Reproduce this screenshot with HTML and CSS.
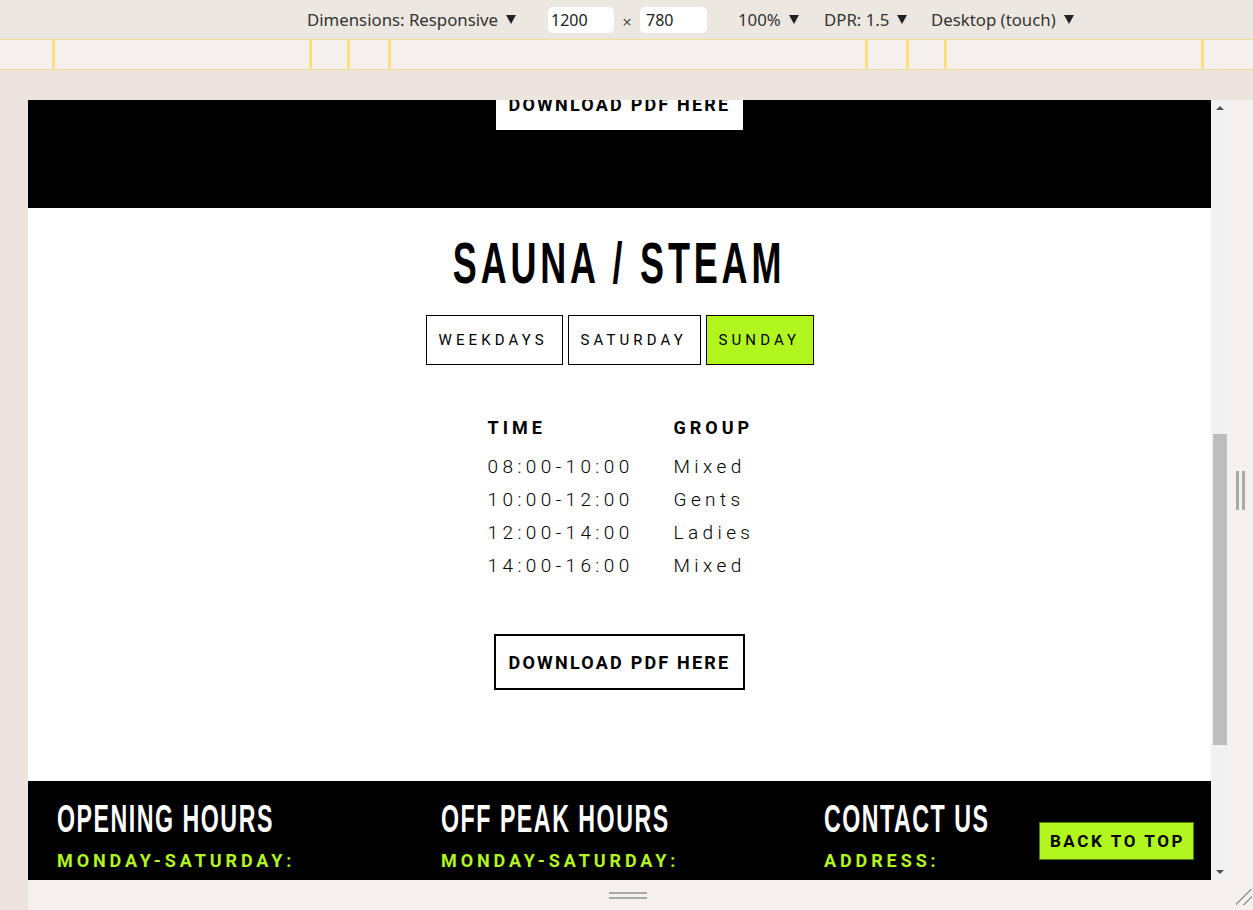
FILE: index.html
```html
<!DOCTYPE html>
<html lang="en">
<head>
<meta charset="utf-8">
<title>Sauna / Steam</title>
<link rel="stylesheet" href="styles.css">
</head>
<body>
<div class="toolbar">
  <div class="tb-item tb-dims">Dimensions: Responsive<span class="caret"></span></div>
  <div class="tb-input">1200</div>
  <div class="tb-times">×</div>
  <div class="tb-input">780</div>
  <div class="tb-item tb-zoom">100%<span class="caret"></span></div>
  <div class="tb-item tb-dpr">DPR: 1.5<span class="caret"></span></div>
  <div class="tb-item tb-dev">Desktop (touch)<span class="caret"></span></div>
</div>
<div class="ruler">
  <span class="tick" style="left:52px"></span>
  <span class="tick" style="left:309px"></span>
  <span class="tick" style="left:347px"></span>
  <span class="tick" style="left:388px"></span>
  <span class="tick" style="left:865px"></span>
  <span class="tick" style="left:906px"></span>
  <span class="tick" style="left:944px"></span>
  <span class="tick" style="left:1201px"></span>
</div>
<div class="stage">
  <div class="device">
    <div class="frame">
      <div class="viewport">
        <div class="page">
          <section class="band-black">
            <a class="btn btn-inverse">DOWNLOAD PDF HERE</a>
          </section>
          <section class="band-white">
            <h2 class="title"><span class="title-text">SAUNA / STEAM</span></h2>
            <div class="tabs">
              <button class="tab">WEEKDAYS</button>
              <button class="tab">SATURDAY</button>
              <button class="tab tab-active">SUNDAY</button>
            </div>
            <div class="schedule">
              <div class="th">TIME</div><div class="th">GROUP</div>
              <div class="td">08:00-10:00</div><div class="td">Mixed</div>
              <div class="td">10:00-12:00</div><div class="td">Gents</div>
              <div class="td">12:00-14:00</div><div class="td">Ladies</div>
              <div class="td">14:00-16:00</div><div class="td">Mixed</div>
            </div>
            <a class="btn">DOWNLOAD PDF HERE</a>
          </section>
          <footer class="footer">
            <div class="fcol">
              <h3 class="fhead"><span class="fhead-text">OPENING HOURS</span></h3>
              <div class="fsub">MONDAY-SATURDAY:</div>
            </div>
            <div class="fcol">
              <h3 class="fhead"><span class="fhead-text">OFF PEAK HOURS</span></h3>
              <div class="fsub">MONDAY-SATURDAY:</div>
            </div>
            <div class="fcol">
              <h3 class="fhead"><span class="fhead-text">CONTACT US</span></h3>
              <div class="fsub">ADDRESS:</div>
            </div>
          </footer>
          <a class="back-top">BACK TO TOP</a>
        </div>
        <div class="scrollbar">
          <span class="sb-up"></span>
          <div class="sb-track"><span class="sb-thumb"></span></div>
          <span class="sb-down"></span>
        </div>
      </div>
      <div class="bottom-bar"><span class="hgrip"></span></div>
    </div>
    <div class="side">
      <span class="vgrip"></span>
      <span class="corner"></span>
    </div>
  </div>
</div>
</body>
</html>
```

FILE: styles.css
```css
* { box-sizing: border-box; }
html, body { margin: 0; padding: 0; }
body {
  width: 1253px;
  height: 910px;
  overflow: hidden;
  background: #ebe5de;
  font-family: "Noto Sans", "Open Sans", sans-serif;
}

/* ---------- devtools toolbar ---------- */
.toolbar {
  height: 39px;
  background: #ede7e1;
  display: flex;
  align-items: center;
  padding-left: 307px;
  font-size: 16.8px;
  color: #333;
}
.tb-item { display: flex; align-items: center; white-space: nowrap; }
.tb-dims { width: 241px; }
.tb-zoom { width: 86px; }
.tb-dpr { width: 107px; }
.caret {
  display: inline-block;
  width: 0; height: 0;
  margin-left: 8px;
  border-left: 5.5px solid transparent;
  border-right: 5.5px solid transparent;
  border-top: 9px solid #222;
}
.tb-input {
  width: 66px;
  height: 26px;
  background: #fff;
  border-radius: 5px;
  padding-left: 3px;
  line-height: 26px;
  font-size: 16px;
  color: #222;
}
.tb-times { width: 26px; text-align: center; color: #555; padding-top: 4px; }
.tb-input + .tb-times + .tb-input { width: 67px; padding-left: 6px; margin-right: 31px; }

/* ---------- ruler ---------- */
.ruler {
  position: relative;
  height: 31px;
  background: #f6f1ef;
  border-top: 1px solid #f6dd8c;
  border-bottom: 1px solid #f6dd8c;
}
.tick {
  position: absolute;
  top: 0;
  width: 3px;
  height: 28px;
  background: #fde07c;
}

/* ---------- stage ---------- */
.stage { padding-top: 30px; padding-left: 28px; }
.device { display: flex; background: #f6f1ef; height: 810px; }
.frame { width: 1200px; display: flex; flex-direction: column; }
.viewport { display: flex; height: 780px; }
.page {
  position: relative;
  width: 1183px;
  height: 780px;
  overflow: hidden;
  background: #fff;
  display: flex;
  flex-direction: column;
  font-family: "Roboto", "Liberation Sans", sans-serif;
  color: #000;
}

.band-black {
  background: #000;
  display: flex;
  flex-direction: column;
  align-items: center;
  padding-bottom: 76px;
  flex-shrink: 0;
}
.band-white {
  display: flex;
  flex-direction: column;
  align-items: center;
  padding-top: 26px;
  padding-bottom: 91px;
  flex-shrink: 0;
}

.btn {
  display: flex;
  align-items: center;
  justify-content: center;
  height: 56px;
  padding: 0 10px;
  border: 2px solid #000;
  background: #fff;
  color: #000;
  font-weight: 700;
  font-size: 18px;
  letter-spacing: 2.2px;
  white-space: nowrap;
  width: 251px;
  text-decoration: none;
}
.btn-inverse { margin-top: -24px; }

.title {
  margin: 0;
  font-family: "Liberation Sans", "Arimo", sans-serif;
  font-weight: 700;
  font-size: 58px;
  line-height: 1;
  display: flex;
  justify-content: center;
}
.title-text {
  display: inline-block;
  letter-spacing: 6.2px;
  transform: scaleX(0.62);
  white-space: nowrap;
}

.tabs { display: flex; gap: 5px; margin-top: 23px; }
.tab {
  height: 50px;
  border: 1px solid #000;
  background: #fff;
  font-family: "Roboto", "Liberation Sans", sans-serif;
  font-size: 15px;
  letter-spacing: 4.1px;
  padding: 0 0 0 12px;
  text-align: left;
  color: #000;
}
.tab:nth-child(1) { width: 137px; }
.tab:nth-child(2) { width: 133px; }
.tab:nth-child(3) { width: 108px; }
.tab-active { background: #b2f61f; }

.schedule {
  display: grid;
  grid-template-columns: 186px 78px;
  margin-top: 46px;
  margin-bottom: 52px;
}
.th {
  font-weight: 700;
  font-size: 18px;
  line-height: 33px;
  letter-spacing: 4px;
  margin-bottom: 6px;
}
.td {
  font-weight: 300;
  font-size: 19px;
  line-height: 33px;
  letter-spacing: 4.4px;
  white-space: nowrap;
}

.footer {
  background: #000;
  display: grid;
  grid-template-columns: 384px 383px 215px;
  padding-left: 29px;
  padding-top: 19px;
  height: 120px;
  flex-shrink: 0;
}
.fhead {
  margin: 0;
  font-family: "Liberation Sans", "Arimo", sans-serif;
  font-weight: 700;
  font-size: 38px;
  line-height: 1;
  color: #fff;
  white-space: nowrap;
}
.fhead-text {
  display: inline-block;
  letter-spacing: 2.5px;
  transform: scaleX(0.61);
  transform-origin: left center;
}
.fsub {
  margin-top: 14px;
  font-weight: 700;
  font-size: 18px;
  line-height: 1;
  letter-spacing: 3.9px;
  color: #b2f61f;
  white-space: nowrap;
}

.back-top {
  position: absolute;
  right: 17px;
  bottom: 20px;
  width: 155px;
  height: 38px;
  background: #b2f61f;
  border: 1px solid #4f7d12;
  display: flex;
  align-items: center;
  justify-content: center;
  padding-left: 2px;
  font-weight: 700;
  font-size: 17px;
  letter-spacing: 2.6px;
  color: #000;
  white-space: nowrap;
}

/* ---------- scrollbar ---------- */
.scrollbar {
  width: 17px;
  background: #f1f1f1;
  display: flex;
  flex-direction: column;
  align-items: center;
}
.sb-up, .sb-down {
  width: 0; height: 0;
  border-left: 4px solid transparent;
  border-right: 4px solid transparent;
  flex: 0 0 4px;
}
.sb-up { border-bottom: 4px solid #505050; margin-top: 6px; margin-bottom: 7px; }
.sb-down { border-top: 4px solid #505050; margin-bottom: 6px; margin-top: 7px; }
.sb-track { flex: 1; width: 100%; padding: 0 1px 0 2px; }
.sb-thumb {
  display: block;
  margin-top: 317px;
  height: 311px;
  background: #bdbdbd;
}

/* ---------- frame edges ---------- */
.bottom-bar {
  height: 30px;
  display: flex;
  justify-content: center;
  padding-top: 12px;
}
.hgrip {
  width: 38px;
  height: 7px;
  border-top: 2px solid #aaa;
  border-bottom: 2px solid #aaa;
}
.side {
  width: 25px;
  display: flex;
  flex-direction: column;
  align-items: center;
}
.vgrip {
  margin-top: 371px;
  width: 9px;
  height: 39px;
  border-left: 3px solid #aaa;
  border-right: 3px solid #aaa;
}
.corner {
  margin-top: auto;
  margin-bottom: 5px;
  margin-left: 6px;
  width: 16px;
  height: 16px;
  background: linear-gradient(135deg, transparent 44%, #999 44%, #999 52%, transparent 52%, transparent 70%, #999 70%, #999 78%, transparent 78%);
}
```
